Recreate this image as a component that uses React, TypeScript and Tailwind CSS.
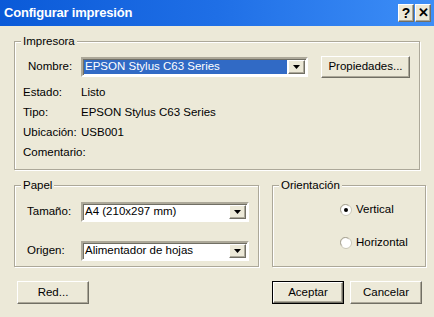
const FONT = "font-['Liberation_Sans',Arial,sans-serif]";

const raised =
  "border border-t-white border-l-white border-r-[#716f64] border-b-[#716f64] shadow-[inset_-1px_-1px_0_#aca899] bg-[#ece9d8]";
const sunken =
  "border-2 border-t-[#aca899] border-l-[#aca899] border-r-white border-b-white bg-white";

function Arrow() {
  return (
    <svg width="7" height="4" viewBox="0 0 7 4">
      <path d="M0 0h7L3.5 4z" fill="#000" />
    </svg>
  );
}

function Combo({ text, selected, width }: { text: string; selected?: boolean; width: string }) {
  return (
    <div className={`${sunken} ${width} h-[20px] flex p-[1px] shadow-[inset_1px_1px_0_#716f64]`}>
      <div
        className={`flex-1 flex items-center pl-[1px] ${
          selected ? "bg-[#316ac5] text-white" : "text-black"
        }`}
      >
        {text}
      </div>
      <div className={`${raised} w-[17px] ml-[1px] flex items-center justify-center`}>
        <Arrow />
      </div>
    </div>
  );
}

function Group({ label, className, children }: { label: string; className: string; children: React.ReactNode }) {
  return (
    <div
      className={`relative border border-[#aca899] shadow-[inset_1px_1px_0_white,1px_1px_0_white] ${className}`}
    >
      <span className="absolute left-[6px] -top-[7px] px-[2px] bg-[#ece9d8] leading-[13px]">
        {label}
      </span>
      {children}
    </div>
  );
}

function Button({ label, def, className }: { label: string; def?: boolean; className: string }) {
  if (def) {
    return (
      <div className={`border border-black ${className}`}>
        <div className={`${raised} w-full h-full flex items-center justify-center`}>{label}</div>
      </div>
    );
  }
  return <div className={`${raised} flex items-center justify-center ${className}`}>{label}</div>;
}

function Radio({ checked }: { checked?: boolean }) {
  return (
    <svg width="12" height="12" viewBox="0 0 12 12">
      <circle cx="6" cy="6" r="5.5" fill="#fff" stroke="#c9c6b6" />
      <path d="M1.8 8.6A4.6 4.6 0 0 1 8.6 1.8" fill="none" stroke="#aca899" />
      {checked && <circle cx="6" cy="6" r="2" fill="#000" />}
    </svg>
  );
}

const INFO = [
  ["Estado:", "Listo"],
  ["Tipo:", "EPSON Stylus C63 Series"],
  ["Ubicación:", "USB001"],
  ["Comentario:", ""],
];

export default function App() {
  return (
    <div className={`w-[434px] h-[317px] bg-[#ece9d8] text-[11.5px] text-black ${FONT} overflow-hidden`}>
      {/* Title bar */}
      <div className="h-[26px] bg-gradient-to-r from-[#0a5ad8] via-[#1f6fe6] to-[#3d8ef7] flex items-center pl-[4px] pr-[3px]">
        <span className="flex-1 text-white font-bold text-[13px] tracking-[-0.2px]">Configurar impresión</span>
        <div className={`${raised} w-[16px] h-[18px] flex items-center justify-center font-bold text-[14px]`}>?</div>
        <div className={`${raised} w-[16px] h-[18px] ml-[1px] flex items-center justify-center font-bold text-[13px]`}>
          ✕
        </div>
      </div>

      <div className="pl-[14px]">
        {/* Impresora */}
        <Group label="Impresora" className="mt-[15px] w-[406px] h-[129px] pt-[14px]">
          <div className="flex items-center h-[22px]">
            <span className="w-[66px] pl-[13px]">Nombre:</span>
            <Combo text="EPSON Stylus C63 Series" selected width="w-[227px]" />
            <Button label="Propiedades..." className="ml-[13px] w-[89px] h-[22px]" />
          </div>
          <div className="mt-[5px]">
            {INFO.map(([k, v]) => (
              <div key={k} className="flex items-center h-[20px]">
                <span className="w-[66px] pl-[8px]">{k}</span>
                <span>{v}</span>
              </div>
            ))}
          </div>
        </Group>

        <div className="flex mt-[15px]">
          {/* Papel */}
          <Group label="Papel" className="w-[245px] h-[82px] pt-[16px]">
            <div className="flex items-center h-[20px]">
              <span className="w-[66px] pl-[12px]">Tamaño:</span>
              <Combo text="A4 (210x297 mm)" width="w-[168px]" />
            </div>
            <div className="flex items-center h-[20px] mt-[19px]">
              <span className="w-[66px] pl-[12px]">Origen:</span>
              <Combo text="Alimentador de hojas" width="w-[168px]" />
            </div>
          </Group>

          {/* Orientación */}
          <Group label="Orientación" className="ml-[13px] w-[154px] h-[82px] pt-[17px]">
            <div className="flex items-center h-[14px] pl-[67px] gap-[4px]">
              <Radio checked />
              <span>Vertical</span>
            </div>
            <div className="flex items-center h-[14px] pl-[67px] gap-[4px] mt-[19px]">
              <Radio />
              <span>Horizontal</span>
            </div>
          </Group>
        </div>

        {/* Buttons */}
        <div className="flex mt-[14px] pl-[3px]">
          <Button label="Red..." className="w-[72px] h-[23px]" />
          <Button label="Aceptar" def className="ml-[183px] w-[72px] h-[23px]" />
          <Button label="Cancelar" className="ml-[6px] w-[72px] h-[23px]" />
        </div>
      </div>
    </div>
  );
}
